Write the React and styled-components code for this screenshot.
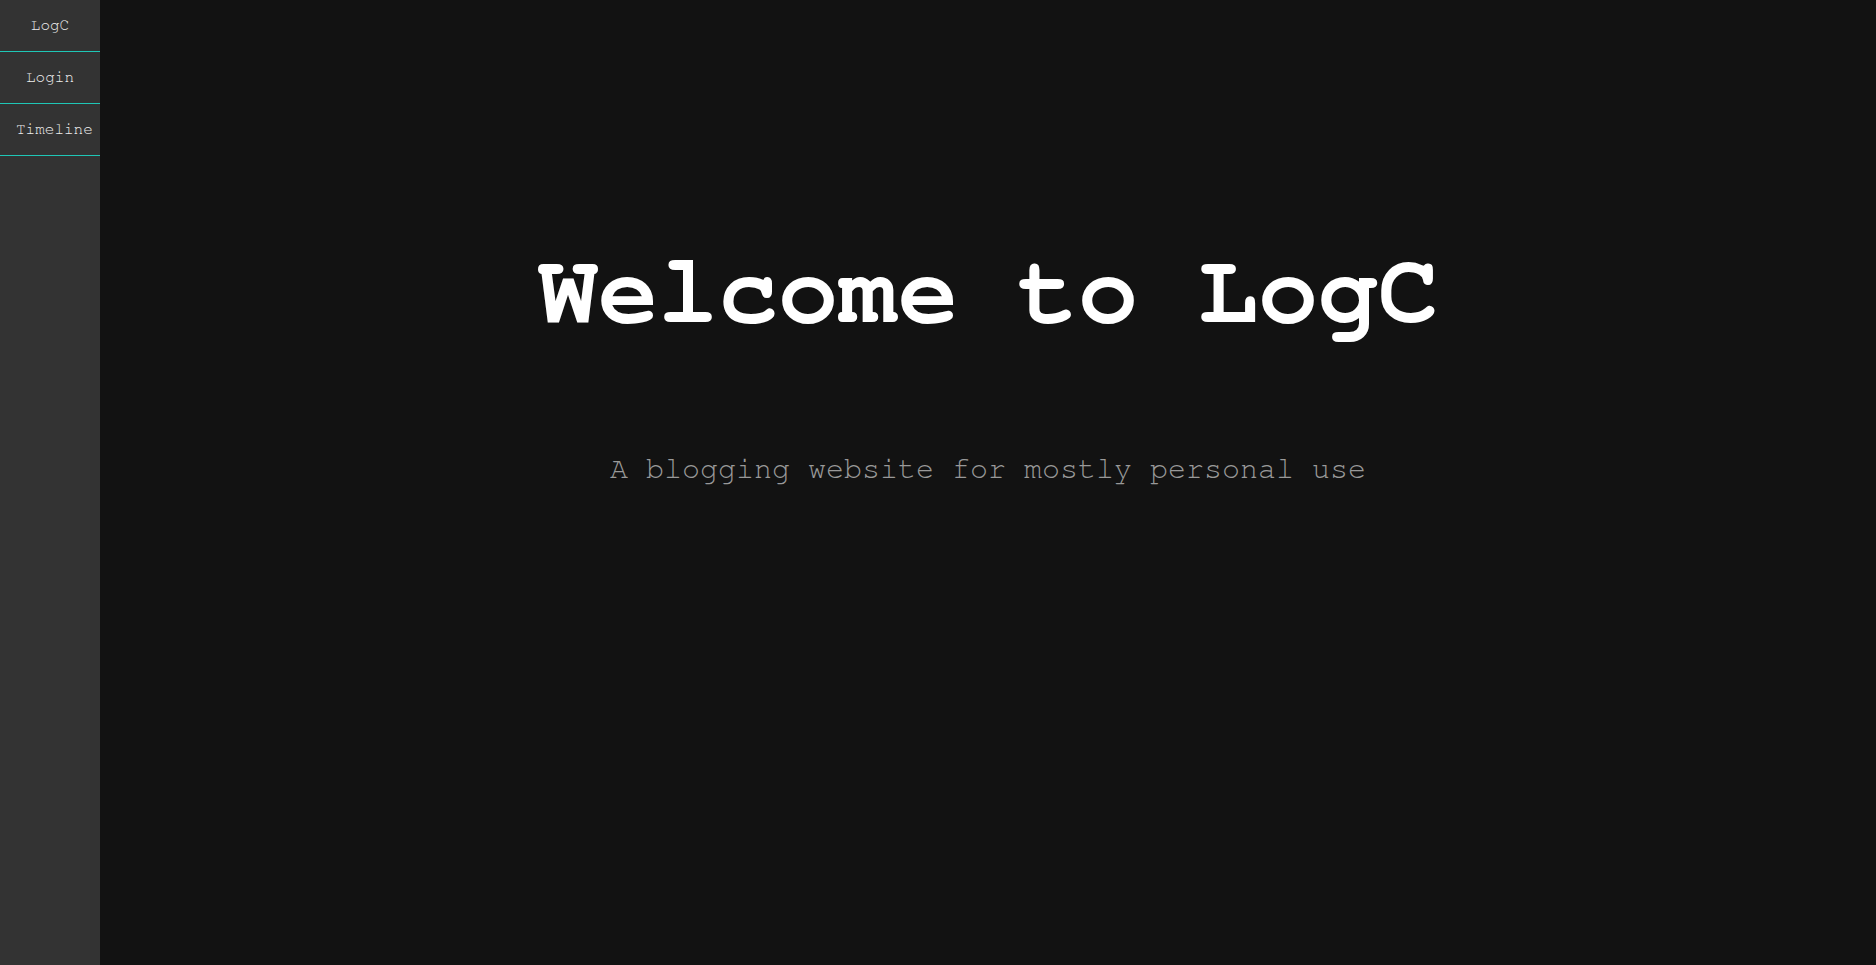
import React from 'react';
import styled, { createGlobalStyle } from 'styled-components';

const GlobalStyle = createGlobalStyle`
  html, body {
    margin: 0;
    padding: 0;
    background-color: #121212;
  }
  body {
    font-family: FreeMono, 'Courier New', monospace;
  }
`;

const Layout = styled.div`
  display: flex;
  min-height: 100vh;
`;

const SideBar = styled.nav`
  width: 100px;
  flex-shrink: 0;
  background-color: #333333;
  display: flex;
  flex-direction: column;
`;

const NavItem = styled.a`
  display: block;
  padding: 16px 16px 17px;
  line-height: 18px;
  font-size: 16px;
  color: #eeeeee;
  text-align: center;
  white-space: nowrap;
  text-decoration: none;
  border-bottom: 1px solid #1fc7b6;
  cursor: pointer;
`;

const Main = styled.main`
  flex: 1;
  display: flex;
  flex-direction: column;
  align-items: center;
  padding-top: 236px;
`;

const Title = styled.h1`
  margin: 0;
  font-size: 100px;
  line-height: 113px;
  font-weight: bold;
  color: #ffffff;
`;

const Subtitle = styled.p`
  margin: 103px 0 0;
  font-size: 30px;
  line-height: 34px;
  color: #999999;
`;

const App = () => {
  return (
    <Layout>
      <GlobalStyle />
      <SideBar>
        <NavItem>LogC</NavItem>
        <NavItem>Login</NavItem>
        <NavItem>Timeline</NavItem>
      </SideBar>
      <Main>
        <Title>Welcome to LogC</Title>
        <Subtitle>A blogging website for mostly personal use</Subtitle>
      </Main>
    </Layout>
  );
};

export default App;
